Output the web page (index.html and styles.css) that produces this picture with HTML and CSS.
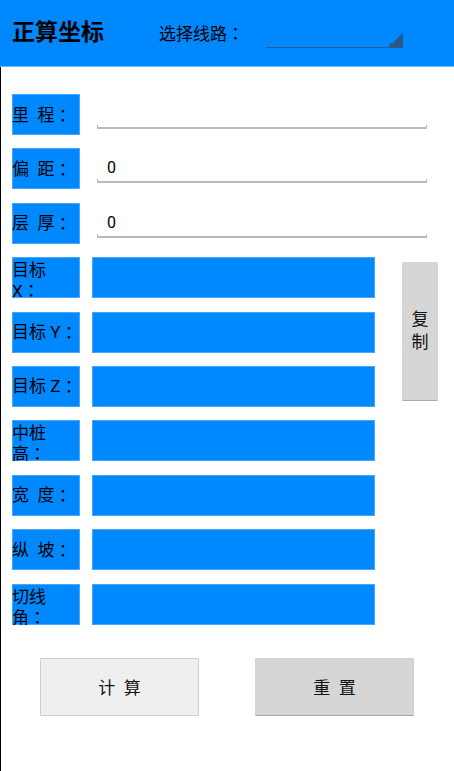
FILE: index.html
```html
<!DOCTYPE html>
<html lang="zh-CN">
<head>
<meta charset="utf-8">
<title>正算坐标</title>
<link rel="stylesheet" href="styles.css">
</head>
<body>
<div class="app">
  <header class="topbar">
    <h1 class="title">正算坐标</h1>
    <span class="route-label">选择线路<span class="colon">：</span></span>
    <div class="spinner"></div>
  </header>
  <main class="content">
    <div class="form">
      <div class="label">里&nbsp;&nbsp;程<span class="colon">：</span></div>
      <div class="edit"><div class="edit-text"></div><div class="edit-line"></div></div>

      <div class="label">偏&nbsp;&nbsp;距<span class="colon">：</span></div>
      <div class="edit"><div class="edit-text">0</div><div class="edit-line"></div></div>

      <div class="label">层&nbsp;&nbsp;厚<span class="colon">：</span></div>
      <div class="edit"><div class="edit-text">0</div><div class="edit-line"></div></div>

      <div class="label label-wrap">目标<br>X<span class="colon">：</span></div>
      <div class="field"></div>
      <button class="copy">复<br>制</button>

      <div class="label">目标 Y<span class="colon">：</span></div>
      <div class="field"></div>

      <div class="label">目标 Z<span class="colon">：</span></div>
      <div class="field"></div>

      <div class="label label-wrap">中桩<br>高<span class="colon">：</span></div>
      <div class="field"></div>

      <div class="label">宽&nbsp;&nbsp;度<span class="colon">：</span></div>
      <div class="field"></div>

      <div class="label">纵&nbsp;&nbsp;坡<span class="colon">：</span></div>
      <div class="field"></div>

      <div class="label label-wrap">切线<br>角<span class="colon">：</span></div>
      <div class="field"></div>
    </div>
    <div class="actions">
      <button class="btn btn-calc">计&nbsp;&nbsp;算</button>
      <button class="btn btn-reset">重&nbsp;&nbsp;置</button>
    </div>
  </main>
</div>
</body>
</html>
```

FILE: styles.css
```css
* {
  box-sizing: border-box;
}

html, body {
  margin: 0;
  padding: 0;
  background: #ffffff;
}

body {
  font-family: Roboto, "Noto Sans CJK SC", "Noto Sans", sans-serif;
  color: #000000;
  width: 454px;
  height: 771px;
  overflow: hidden;
}

.app {
  display: flex;
  flex-direction: column;
  height: 771px;
}

.colon {
  display: inline-block;
  width: 1em;
  text-align: center;
  font-family: "Noto Sans CJK JP", "Noto Sans CJK TC", sans-serif;
}

.topbar {
  height: 67px;
  background: #0088ff;
  border-bottom: 1px solid #6cbcff;
  display: flex;
  align-items: center;
  flex-shrink: 0;
}

.title {
  margin: 0 0 0 12px;
  width: 147px;
  font-size: 23px;
  font-weight: 700;
  line-height: 28px;
}

.route-label {
  width: 107px;
  font-size: 17px;
  line-height: 24px;
  white-space: nowrap;
}

.spinner {
  width: 137px;
  height: 30px;
  border-bottom: 1px solid #2a5c8a;
  display: flex;
  justify-content: flex-end;
  align-items: flex-end;
}

.spinner::after {
  content: "";
  width: 15px;
  height: 15px;
  background: linear-gradient(to bottom right, transparent 50%, #285a88 50%);
}

.content {
  flex: 1;
  border-left: 1px solid #000000;
  padding: 27px 0 0 11px;
}

.form {
  display: grid;
  grid-template-columns: 68px 283px 63px;
  grid-auto-rows: 41px;
  column-gap: 12px;
  row-gap: 13.4px;
}

.label {
  grid-column: 1;
  background: #0088ff;
  box-shadow: inset 0 0 0 1px #45a8ff;
  font-size: 17px;
  line-height: 20px;
  display: flex;
  align-items: center;
  padding-left: 0;
  white-space: nowrap;
  overflow: hidden;
}

.label-wrap {
  display: block;
  padding-top: 3px;
}

.edit {
  grid-column: 2 / 4;
  margin-left: 5px;
  width: 330px;
  display: flex;
  flex-direction: column;
}

.edit-text {
  height: 31px;
  padding: 8px 0 0 10px;
  font-size: 16px;
  line-height: 23px;
}

.edit-line {
  height: 4px;
  border: 1px solid #bababa;
  border-top: none;
  border-bottom-width: 2px;
}

.field {
  grid-column: 2;
  background: #0088ff;
  box-shadow: inset 0 0 0 1px #45a8ff;
}

.copy {
  grid-column: 3;
  grid-row: 4 / span 3;
  margin: 5px 0 6px 15px;
  width: 36px;
  padding: 0;
  border: none;
  border-bottom: 1px solid #a9a9a9;
  border-radius: 1px;
  background: #d6d6d6;
  font-family: Roboto, "Noto Sans CJK SC", sans-serif;
  font-size: 17px;
  line-height: 23px;
  color: #111111;
}

.actions {
  display: flex;
  gap: 56px;
  margin-top: 33px;
  padding-left: 28px;
}

.btn {
  width: 159px;
  height: 58px;
  padding: 0;
  font-family: Roboto, "Noto Sans CJK SC", sans-serif;
  font-size: 17px;
  color: #111111;
  border-radius: 1px;
}

.btn-calc {
  background: #efefef;
  border: 1px solid #cdcdcd;
}

.btn-reset {
  background: #d6d6d6;
  border: 1px solid #d3d3d3;
  border-bottom-color: #a6a6a6;
}
```
